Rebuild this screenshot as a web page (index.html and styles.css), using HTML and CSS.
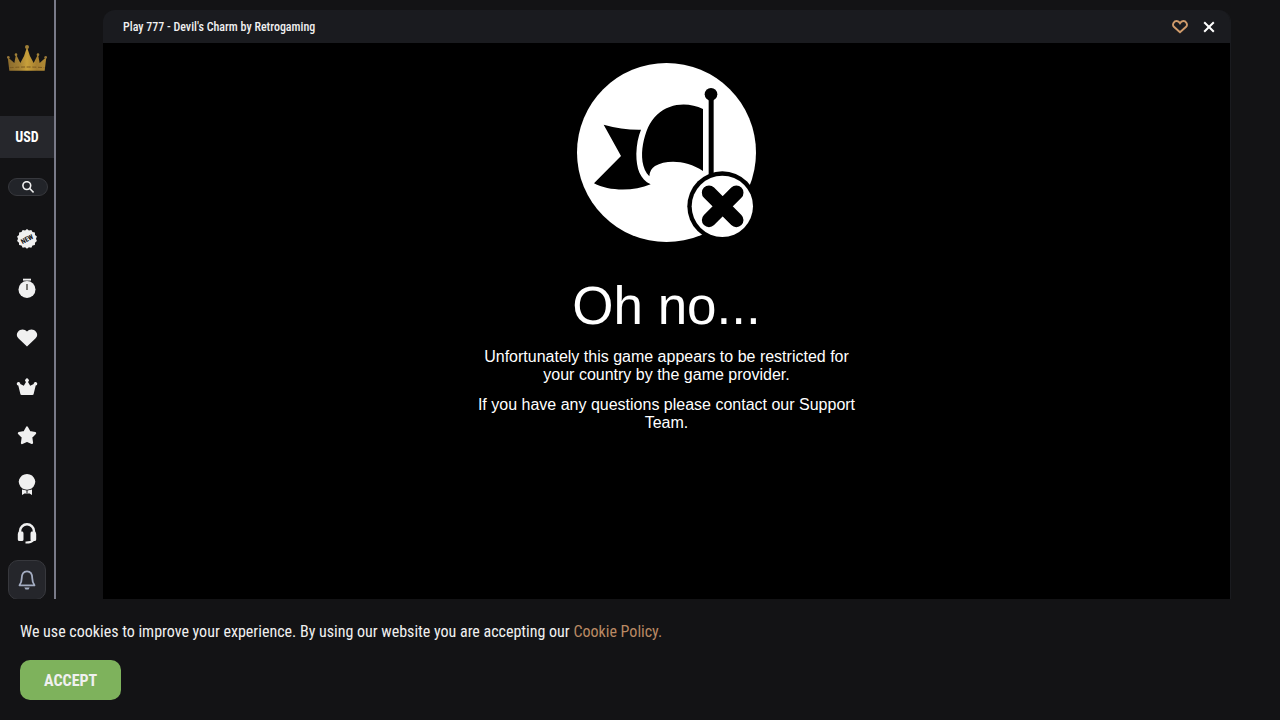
FILE: index.html
```
<!DOCTYPE html>
<html lang="en">
<head>
<meta charset="utf-8">
<meta name="viewport" content="width=device-width, initial-scale=1">
<title>Play 777 - Devil's Charm by Retrogaming</title>
<link rel="stylesheet" href="styles.css">
</head>
<body>
<div class="layout">
  <aside class="sidebar">
    <a class="logo" href="#" aria-label="Home">
      <svg viewBox="0 0 120 78" width="40" height="26">
        <defs>
          <linearGradient id="gold" x1="0" x2="1" y1="0" y2="0">
            <stop offset="0" stop-color="#8a6a2c"/>
            <stop offset=".3" stop-color="#a38034"/>
            <stop offset=".5" stop-color="#c8a03a"/>
            <stop offset=".75" stop-color="#a67f30"/>
            <stop offset="1" stop-color="#b08a34"/>
          </linearGradient>
        </defs>
        <path fill="url(#gold)" d="M7 77 L2 36 L22 54 L27 28 L40 54 Q53 34 60 6 Q67 34 80 54 L93 28 L98 54 L118 36 L113 77Z"/>
        <circle cx="60" cy="6" r="6" fill="#a08038"/>
        <circle cx="27" cy="29" r="4" fill="#a08038"/>
        <circle cx="93" cy="29" r="4" fill="#a08038"/>
        <circle cx="4" cy="37" r="4" fill="#96763a"/>
        <circle cx="116" cy="37" r="4" fill="#96763a"/>
        <path d="M8 68 Q60 64 112 68" stroke="#7c5a20" stroke-width="3" stroke-dasharray="12 5" fill="none"/>
      </svg>
    </a>
    <button class="currency" type="button">USD</button>
    <button class="search" type="button" aria-label="Search">
      <svg viewBox="0 0 12 12" width="12" height="12" fill="none" stroke="#f0f0f0" stroke-width="1.6"><circle cx="4.800" cy="4.600" r="3.900"/><path d="M7.500 7.300 11.600 11.400"/></svg>
    </button>
    <nav class="menu" aria-label="Games">
      <a href="#" aria-label="New">
        <svg viewBox="0 0 22 22" width="22" height="22">
          <path fill="#f0f0f0" d="M11 1l1.900 1.500 2.400-.6 1.200 2.100 2.400.5.100 2.500 1.900 1.500-.9 2.300.9 2.300-1.900 1.600-.1 2.400-2.400.5-1.200 2.200-2.400-.6L11 20.700l-1.900-1.500-2.400.6-1.200-2.200-2.400-.5-.1-2.400-1.900-1.600.9-2.300-.9-2.300L3 7l.1-2.500L5.500 4l1.200-2.100 2.400.6z"/>
          <text class="badge-text" x="11" y="13.500" transform="rotate(-28 11 11)">NEW</text>
        </svg>
      </a>
      <a href="#" aria-label="Recently played">
        <svg viewBox="0 0 22 22" width="22" height="22" fill="#f0f0f0"><path d="M7 1.700h8v1.900H7z"/><circle cx="11" cy="12.500" r="8.500"/><path d="M11 7v6" stroke="#3b3933" stroke-width="1.300"/></svg>
      </a>
      <a href="#" aria-label="Favourites">
        <svg viewBox="0 0 22 22" width="22" height="22" fill="#f0f0f0"><path d="M11 20.500 2.600 12.500A5.200 5.200 0 0 1 2 5.700C4.100 2.700 8.700 2.600 11 5.500 13.300 2.600 17.900 2.700 20 5.700A5.200 5.200 0 0 1 19.400 12.500Z"/></svg>
      </a>
      <a href="#" aria-label="Top games">
        <svg viewBox="0 0 22 22" width="22" height="22" fill="#f0f0f0"><path d="M4.500 19.500 2.300 10.500A1.800 1.800 0 1 1 4.300 9L7.800 10.800 10 7A1.900 1.900 0 1 1 12 7L14.200 10.800 17.700 9A1.800 1.800 0 1 1 19.700 10.500L17.500 19.500Q16.500 20 15.500 20h-9Q5.500 20 4.500 19.500Z"/></svg>
      </a>
      <a href="#" aria-label="Popular">
        <svg viewBox="0 0 22 22" width="22" height="22" fill="#f0f0f0" stroke="#f0f0f0" stroke-width="2.200" stroke-linejoin="round"><path d="M11 3.500l2.500 4.500 5.600 1.200-3.900 4 .8 5.800-5-2.200L6 19l.8-5.800-3.900-4L8.500 8z"/></svg>
      </a>
      <a href="#" aria-label="Awards">
        <svg viewBox="0 0 22 22" width="22" height="22" fill="#f0f0f0"><path d="M11 1l2.700.5 2.300 1.100 1.700 1.900 1.100 2 .5 2.300-.5 2.300-1.100 2.200-1.700 1.900-2.300 1.100-2.700.5-2.700-.5L6 15.200l-1.700-1.900-1.100-2.200-.5-2.300.5-2.300 1.100-2L6 2.600l2.300-1.100z"/><path d="M6 16.600l4.500 1v3.300l-1.500-.6-3 1.700zM16 16.600l-4.500 1v3.300l1.500-.6 3 1.700z"/></svg>
      </a>
      <a href="#" aria-label="Support">
        <svg viewBox="0 0 22 22" width="22" height="22" fill="#f0f0f0"><path d="M4 12V9.300A7 7 0 0 1 18 9.300V12" fill="none" stroke="#f0f0f0" stroke-width="2.500"/><path d="M3.500 9.500h3Q7.500 10 7.500 11.500v6Q7.500 19 6 19H3.500Q1.800 19 1.800 17.500V12Q2 9.500 3.500 9.500zM18.500 9.500h-3Q14.500 10 14.500 11.500v6q0 1.500 1.500 1.500h2.500q1.700 0 1.700-1.500V12Q20 9.500 18.500 9.500z"/><path d="M17.500 18Q15 20.800 9.500 20.600" fill="none" stroke="#f0f0f0" stroke-width="2"/></svg>
      </a>
    </nav>
    <button class="bell" type="button" aria-label="Notifications">
      <svg viewBox="0 0 18 20" width="18" height="20" fill="none" stroke="#a4adc2" stroke-width="1.800"><path d="M1.500 15.300Q3.700 12.500 3.700 8.500C3.700 4 5.500 1.400 9 1.400S14.300 4 14.300 8.500Q14.300 12.500 16.500 15.300Z" stroke-linejoin="round"/><path d="M6.300 17.600h5.400L10.500 19.400h-3z" fill="#a4adc2" stroke="none"/></svg>
    </button>
  </aside>
  <main class="content">
    <section class="game">
      <header class="game-bar">
        <h1 class="game-title">Play 777 - Devil's Charm by Retrogaming</h1>
        <div class="game-actions">
          <button class="icon-button" type="button" aria-label="Add to favourites">
            <svg viewBox="0 0 16 14" width="16" height="14" fill="none" stroke="#cf9b6b" stroke-width="1.900"><path d="M8 12.300 1.900 6.800C-.3 4.200 2.200 1 4.700 1 6.300 1 7.300 2 8 3.200 8.700 2 9.700 1 11.300 1c2.500 0 5 3.200 2.800 5.800Z"/></svg>
          </button>
          <button class="icon-button" type="button" aria-label="Close">
            <svg viewBox="0 0 12 12" width="12" height="12" stroke="#fff" stroke-width="2"><path d="M1.200 1.200l9.600 9.600M10.800 1.200 1.200 10.800"/></svg>
          </button>
        </div>
      </header>
      <div class="stage">
        <svg class="flag" viewBox="30 33 537 537" width="179" height="179" aria-hidden="true">
          <circle cx="298.500" cy="301.500" r="268.500" fill="#fff"/>
          <path d="M110 218Q166 234 222 233Q209 265 208 305C208 350 219 381 251 397C200 419 125 418 81 394L162 312Z"/>
          <path d="M408 171V357C360 324 298 322 264 342Q248 352 247 373C224 352 222 309 228 277C235 239 248 208 270 188C311 151 366 151 408 171Z"/>
          <circle cx="432" cy="127" r="19"/>
          <path d="M425 127h15v240h-15z"/>
          <circle cx="466" cy="463" r="105"/>
          <circle cx="466" cy="463" r="92" fill="#fff"/>
          <path d="M426 422l82 82M508 422l-82 82" stroke="#000" stroke-width="43" stroke-linecap="round"/>
        </svg>
        <h2 class="stage-title">Oh no...</h2>
        <div class="stage-text">
          <p>Unfortunately this game appears to be restricted for your country by the game provider.</p>
          <p>If you have any questions please contact our Support Team.</p>
        </div>
      </div>
    </section>
  </main>
</div>
<section class="cookies" aria-label="Cookies">
  <p class="cookies-text">We use cookies to improve your experience. By using our website you are accepting our <a href="#">Cookie Policy.</a></p>
  <button class="accept" type="button">ACCEPT</button>
</section>
</body>
</html>
```
FILE: styles.css
```
* { box-sizing: border-box; }
body {
  margin: 0;
  background: #131315;
  color: #f0f0f0;
  font-family: "Roboto Condensed", "Liberation Sans Narrow", Roboto, sans-serif;
}
button { font-family: inherit; color: inherit; cursor: pointer; }
svg { display: block; }
h1, h2, p { margin: 0; }
.layout { display: flex; height: 100vh; overflow: hidden; }
.sidebar {
  flex: none;
  width: 56px;
  border-right: 2px solid #797a88;
  display: flex;
  flex-direction: column;
}
.logo { height: 116px; flex: none; display: flex; align-items: center; justify-content: center; }
.currency {
  flex: none;
  height: 42px;
  border: 0;
  padding: 0;
  background: #26272c;
  color: #fff;
  font-size: 14px;
  font-weight: 700;
}
.search {
  flex: none;
  display: flex;
  align-items: center;
  justify-content: center;
  width: 40px;
  height: 18px;
  margin: 20px 0 18px 8px;
  padding: 0;
  border: 1px solid #37383d;
  border-radius: 9px;
  background: #222429;
}
.menu { display: grid; grid-auto-rows: 49px; flex: none; }
.menu a { display: flex; align-items: center; justify-content: center; }
.badge-text { font-size: 7px; font-weight: 700; fill: #131315; text-anchor: middle; }
.bell {
  flex: none;
  display: flex;
  align-items: center;
  justify-content: center;
  width: 38px;
  height: 40px;
  margin: 3px 8px 0;
  padding: 0;
  border: 1px solid #37383d;
  border-radius: 10px;
  background: #25262b;
}
.content { flex: 1; min-width: 0; padding: 10px 49px 0 47px; display: flex; }
.game {
  flex: 1;
  display: flex;
  flex-direction: column;
  border-right: 1px solid #1a1b1f;
  border-radius: 12px 12px 0 0;
  overflow: hidden;
}
.game-bar {
  display: flex;
  align-items: center;
  justify-content: space-between;
  height: 33px;
  padding: 0 15px 0 20px;
  background: #1a1b1f;
}
.game-title { font-size: 12px; font-weight: 500; line-height: 16px; }
.game-actions { display: flex; align-items: center; gap: 15px; }
.icon-button { padding: 0; border: 0; background: none; }
.stage {
  flex: 1;
  display: flex;
  flex-direction: column;
  align-items: center;
  padding: 20px;
  background: #000;
  color: #fff;
  font-family: "Liberation Sans", Arial, sans-serif;
  text-align: center;
}
.stage-title { margin-top: 34px; font-size: 53px; font-weight: 400; line-height: 60px; }
.stage-text { display: grid; gap: 12px; max-width: 400px; margin-top: 12px; font-size: 16px; line-height: 18px; }
.cookies {
  position: fixed;
  left: 0;
  right: 0;
  bottom: 0;
  padding: 20px;
  background: #131315;
}
.cookies-text { font-size: 16px; line-height: 26px; }
.cookies-text a { color: #ba8963; text-decoration: none; }
.accept {
  height: 40px;
  margin-top: 15px;
  padding: 0 24px;
  border: 0;
  border-radius: 10px;
  background: #7eb25c;
  display: block;
  font-size: 16px;
  font-weight: 700;
}
```
